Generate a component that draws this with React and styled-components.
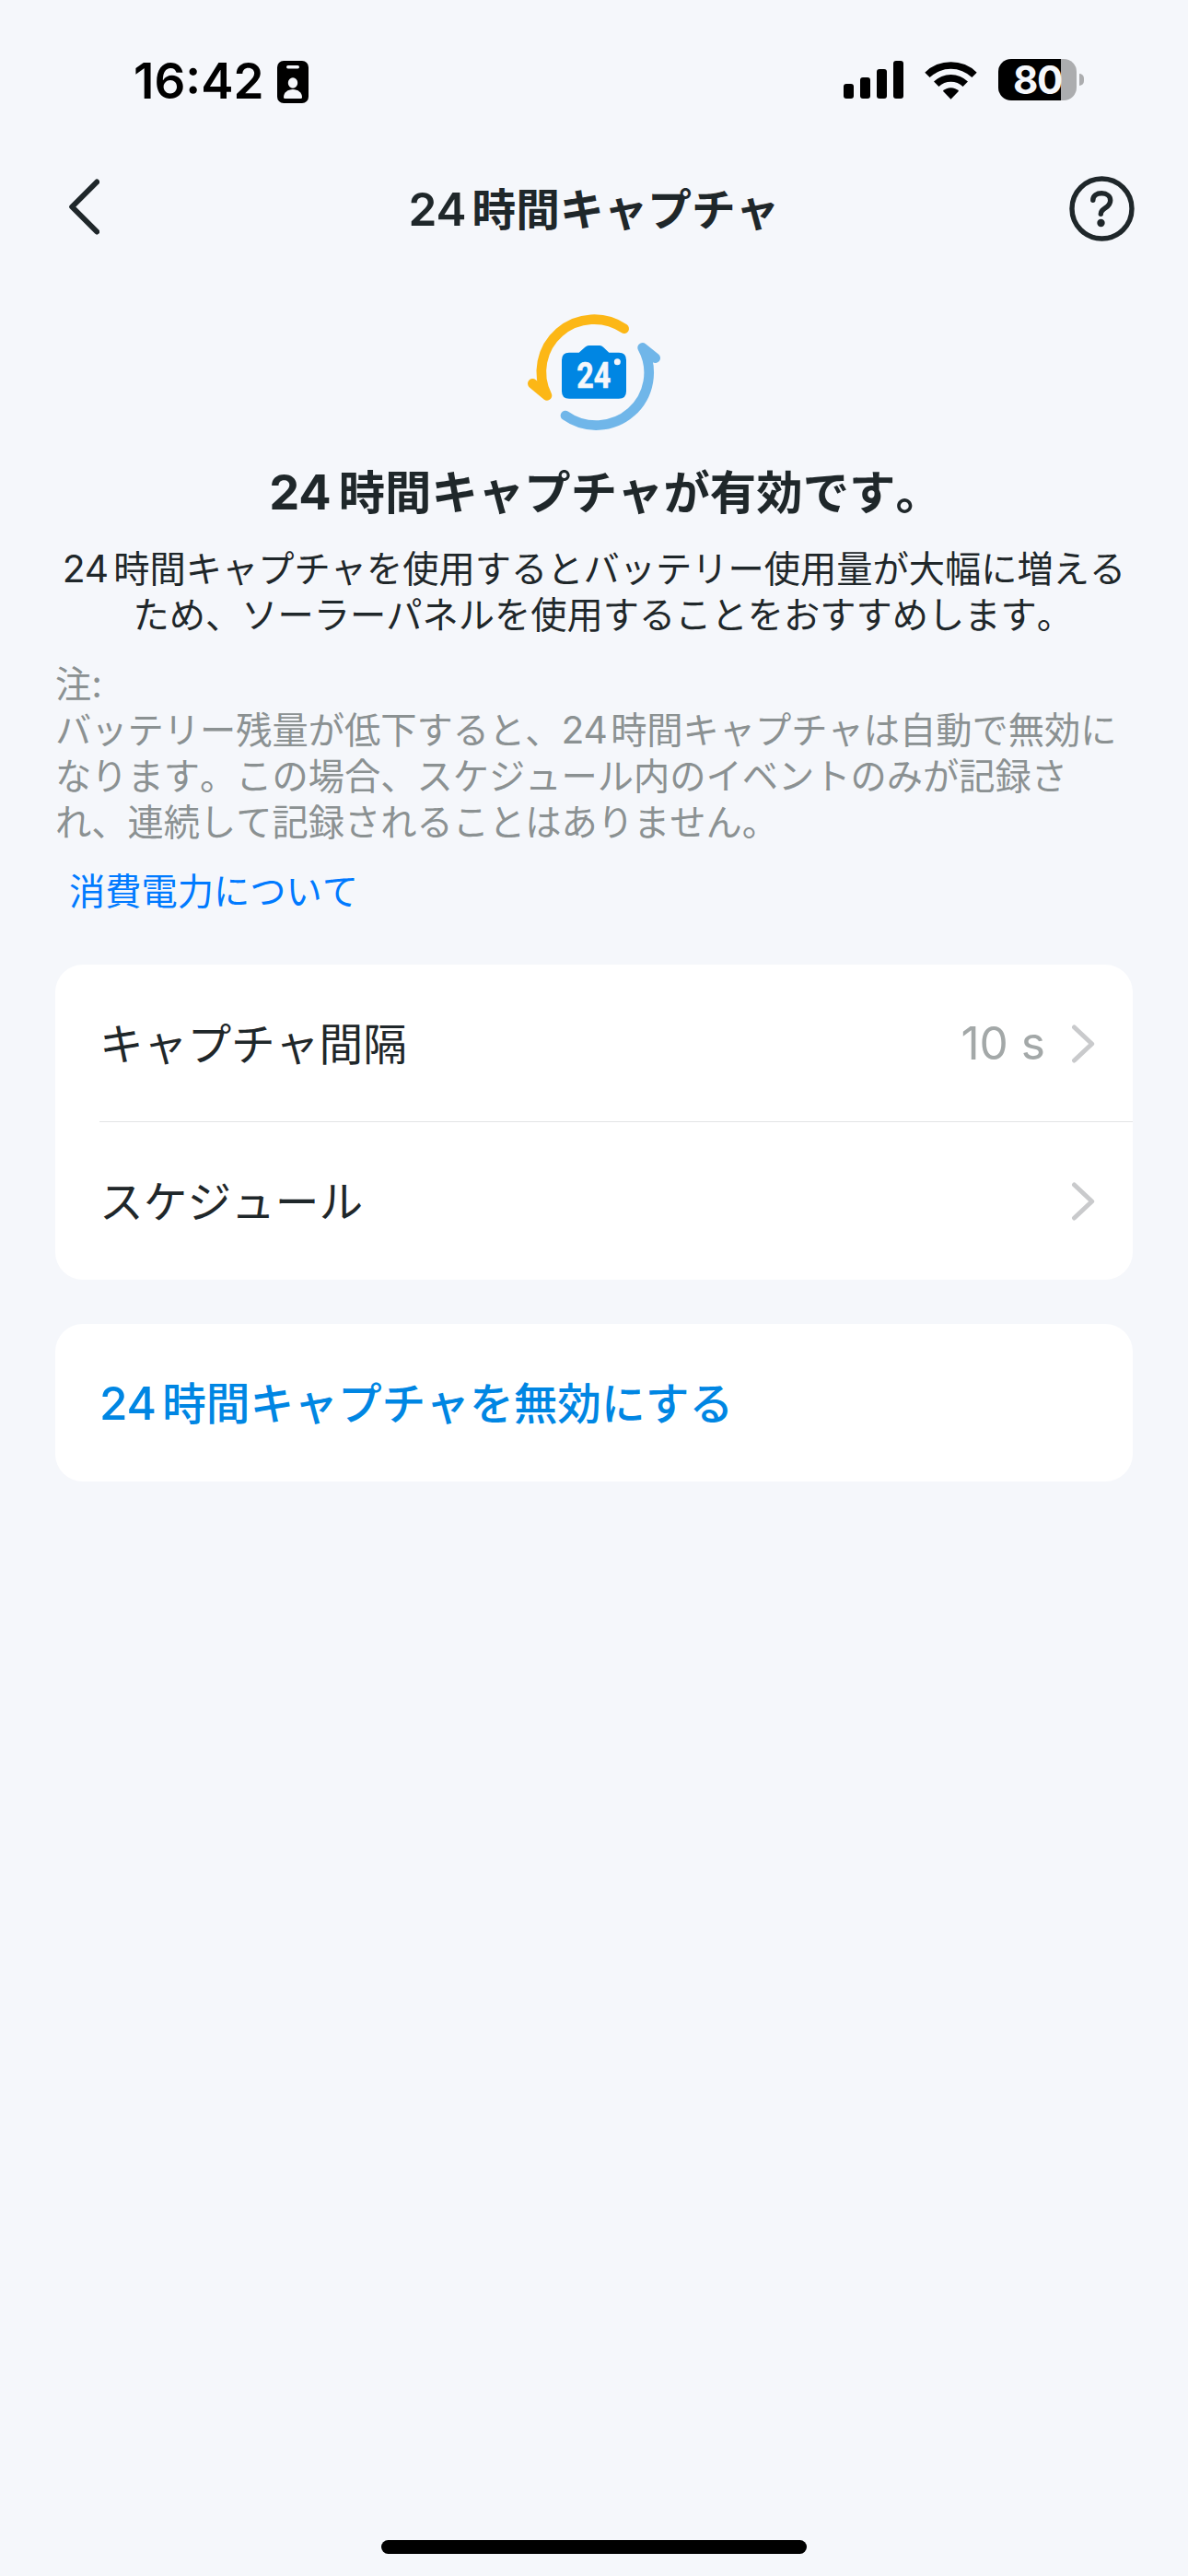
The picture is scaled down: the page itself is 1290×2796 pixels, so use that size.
import React from "react";
import styled, { createGlobalStyle } from "styled-components";

const color = {
  page: "#f5f7fb",
  ink: "#1f272a",
  muted: "#8b9192",
  value: "#a3a8a8",
  chevron: "#c9cacc",
  link: "#007aff",
  brand: "#0086e3",
  amber: "#fcb716",
  sky: "#70b6e9",
};

const GlobalStyle = createGlobalStyle`
  *, *::before, *::after { box-sizing: border-box; }
  body { margin: 0; background: ${color.page}; }
  button { border: 0; padding: 0; background: none; font: inherit; color: inherit; text-align: left; }
  svg { display: block; flex: none; }
`;

const Screen = styled.div`
  display: flex;
  flex-direction: column;
  width: 1290px;
  height: 2796px;
  overflow: hidden;
  background: ${color.page};
  color: ${color.ink};
  font-family: "Noto Sans CJK JP", Inter, sans-serif;
  font-kerning: none;
  text-spacing-trim: space-all;
  white-space: nowrap;
`;

const StatusBar = styled.header`
  display: flex;
  justify-content: space-between;
  align-items: flex-start;
  height: 177px;
  padding: 64px 113px 0 145px;
  color: #000;
`;

const StatusGroup = styled.div`
  display: flex;
  align-items: center;
  height: 45px;
  gap: ${(p) => p.$gap}px;
  margin-top: ${(p) => p.$drop || 0}px;
`;

const Clock = styled.span`
  width: 140px;
  font: 600 53px/45px Inter, sans-serif;
  letter-spacing: 0;
  font-kerning: normal;
`;

const Battery = styled.div`
  display: flex;
  align-items: center;
  gap: 3px;
`;

const BatteryBody = styled.div`
  width: 85px;
  height: 45px;
  padding-left: 16px;
  border-radius: 14px;
  background: linear-gradient(to right, #000 80%, #acadaf 80%);
  color: ${color.page};
  font: 700 42px/46px Inter, sans-serif;
  letter-spacing: -1.4px;
`;

const BatteryTip = styled.div`
  width: 5px;
  height: 13px;
  border-radius: 0 5px 5px 0;
  background: #acadaf;
`;

const NavBar = styled.nav`
  display: grid;
  grid-template-columns: 106px 1fr 120px;
  align-items: center;
  height: 94px;
  padding: 0 58px 0 72px;
`;

const NavButton = styled.button`
  display: flex;
  justify-content: ${(p) => p.$align};
  padding-top: ${(p) => p.$drop || 0}px;
`;

const NavTitle = styled.h1`
  margin: 0;
  text-align: center;
  font-size: 47.7px;
  font-weight: 700;
  line-height: 95px;
`;

const Num = styled.span`
  margin-right: ${(p) => p.$gap || 0}px;
  font-family: Inter, sans-serif;
  font-size: 1.04em;
  font-weight: ${(p) => p.$weight || 400};
  line-height: 0;
  letter-spacing: -0.02em;
`;

/* Closing full stop set half-width so a centred line is balanced on its ink. */
const LineEndStop = styled.span`
  margin-right: -0.5em;
`;

const Main = styled.main`
  display: flex;
  flex-direction: column;
  flex: 1;
  padding: 69px 60px 0;
`;

const HeroArt = styled.div`
  display: flex;
  justify-content: center;
  height: 159px;
`;

const Heading = styled.h2`
  margin: 0 0 25px;
  text-align: center;
  font-size: 50.4px;
  font-weight: 700;
  line-height: 66px;
`;

const Paragraph = styled.p`
  margin: 0 0 25px;
  text-align: ${(p) => p.$align || "left"};
  color: ${(p) => p.$color || "inherit"};
  font-size: 39.25px;
  line-height: 50px;
`;

const TextLink = styled.a`
  align-self: flex-start;
  margin: 0 0 57px 15px;
  color: ${color.link};
  font-size: 39.25px;
  line-height: 50px;
`;

const Card = styled.section`
  display: flex;
  flex-direction: column;
  margin-bottom: 48px;
  padding-left: 48px;
  border-radius: 30px;
  background: #fff;
`;

const Row = styled.button`
  display: flex;
  align-items: center;
  height: ${(p) => (p.$divided ? 172 : 171)}px;
  margin-top: ${(p) => (p.$divided ? -1 : 0)}px;
  padding: 0 41px 0 0;
  border-top: ${(p) => (p.$divided ? "1px solid #e3e4e6" : "0")};
`;

const RowLabel = styled.span`
  flex: 1;
  padding-bottom: 4px;
  color: ${(p) => p.$color || color.ink};
  font-size: 47.7px;
  font-weight: ${(p) => p.$weight || 400};
`;

const RowValue = styled.span`
  margin-right: 28px;
  color: ${color.value};
  font: 400 49.6px/1 Inter, sans-serif;
  font-kerning: normal;
`;

const HomeArea = styled.footer`
  display: flex;
  justify-content: center;
  height: 39px;
`;

const HomeIndicator = styled.div`
  width: 462px;
  height: 15px;
  border-radius: 8px;
  background: #000;
`;

const BadgeIcon = () => (
  <svg width="34" height="46" viewBox="0 0 34 46">
    <rect width="34" height="46" rx="7" fill="#000" />
    <rect x="10" y="5" width="14" height="3.4" rx="1.7" fill={color.page} />
    <ellipse cx="17" cy="24" rx="5.2" ry="5.8" fill={color.page} />
    <path d="M7 39.5C7 34.5 11.5 31 17 31s10 3.500 10 8.500q0 1.500-1.500 1.500h-17Q7 41 7 39.500z" fill={color.page} />
  </svg>
);

const SignalIcon = () => (
  <svg width="65" height="41" viewBox="0 0 65 41">
    {[25, 18, 9, 0].map((top, i) => (
      <rect key={top} x={i * 18} y={top} width="11" height={41 - top} rx="3" />
    ))}
  </svg>
);

const WifiIcon = () => (
  <svg width="57" height="42" viewBox="0 0 58 42">
    <path d="M0.300 12.500A41 41 0 0 1 57.700 12.500L52.300 18A33.500 33.500 0 0 0 5.700 18z" />
    <path d="M10.200 22.600A27 27 0 0 1 47.800 22.600L42.300 28.200A19 19 0 0 0 15.700 28.200z" />
    <path d="M20.200 33A12.500 12.500 0 0 1 37.800 33L29 42z" />
  </svg>
);

const BackIcon = () => (
  <svg width="36" height="62" viewBox="0 0 36 62" fill="none" stroke={color.ink} strokeWidth="6" strokeLinecap="round" strokeLinejoin="round">
    <path d="M33.200 3.500L6.200 30.500l27 27" />
  </svg>
);

const HelpIcon = () => (
  <svg width="71" height="71" viewBox="0 0 71 71" fill="none" stroke={color.ink} strokeWidth="5.4" strokeLinecap="round">
    <circle cx="35.500" cy="35.500" r="32.500" />
    <path d="M25.800 26.200C25.800 21.500 30 18.800 35.200 18.800C41 18.800 44.700 22 44.700 26.500C44.700 30.500 42.500 32.500 39.500 34.500C36.300 36.600 34.300 38 34.300 41.300" />
    <circle cx="34.500" cy="51" r="4.200" fill={color.ink} stroke="none" />
  </svg>
);

const ChevronIcon = () => (
  <svg width="26" height="42" viewBox="0 0 26 42" fill="none" stroke={color.chevron} strokeWidth="5" strokeLinecap="round" strokeLinejoin="round">
    <path d="M3.500 3L22.700 21L3.500 39" />
  </svg>
);

const CaptureArt = () => (
  <svg width="150" height="128" viewBox="90 60 450 384">
    <g fill="none" strokeWidth="32" strokeLinecap="round" strokeLinejoin="round">
      <path d="M413 110A172 171 0 0 0 162 328L115 289" stroke={color.amber} />
      <path d="M222 393A172 171 0 0 0 473 172L515 206" stroke={color.sky} />
    </g>
    <path
      d="M234 188h32l20-18q6-5 12-5h36q6 0 11 5l19 18h32q24 0 24 24v102q0 24-24 24H234q-24 0-24-24V212q0-24 24-24z"
      fill={color.brand}
    />
    <circle cx="391" cy="218" r="10.500" fill={color.page} />
    <text
      x="259"
      y="304"
      fill={color.page}
      stroke={color.page}
      strokeWidth="2"
      fontFamily="Roboto, sans-serif"
      fontWeight="700"
      fontSize="117"
      textLength="111"
      lengthAdjust="spacingAndGlyphs"
    >
      24
    </text>
  </svg>
);

export default function App() {
  return (
    <Screen>
      <GlobalStyle />
      <StatusBar>
        <StatusGroup $gap={16} $drop={2}>
          <Clock>16:42</Clock>
          <BadgeIcon />
        </StatusGroup>
        <StatusGroup $gap={23}>
          <SignalIcon />
          <WifiIcon />
          <Battery>
            <BatteryBody>80</BatteryBody>
            <BatteryTip />
          </Battery>
        </StatusGroup>
      </StatusBar>

      <NavBar>
        <NavButton $align="flex-start" aria-label="戻る">
          <BackIcon />
        </NavButton>
        <NavTitle>
          <Num $weight={600} $gap={7}>24</Num>時間キャプチャ
        </NavTitle>
        <NavButton $align="flex-end" $drop={3} aria-label="ヘルプ">
          <HelpIcon />
        </NavButton>
      </NavBar>

      <Main>
        <HeroArt>
          <CaptureArt />
        </HeroArt>
        <Heading>
          <Num $weight={700} $gap={9}>24</Num>時間キャプチャが有効です<LineEndStop>。</LineEndStop>
        </Heading>
        <Paragraph $align="center">
          <Num $gap={6}>24</Num>時間キャプチャを使用するとバッテリー使用量が大幅に増える
          <br />
          ため、ソーラーパネルを使用することをおすすめします<LineEndStop>。</LineEndStop>
        </Paragraph>
        <Paragraph $color={color.muted}>
          注<Num>:</Num>
          <br />
          バッテリー残量が低下すると、<Num $gap={4}>24</Num>時間キャプチャは自動で無効に
          <br />
          なります。この場合、スケジュール内のイベントのみが記録さ
          <br />
          れ、連続して記録されることはありません。
        </Paragraph>
        <TextLink>消費電力について</TextLink>

        <Card>
          <Row>
            <RowLabel>キャプチャ間隔</RowLabel>
            <RowValue>10 s</RowValue>
            <ChevronIcon />
          </Row>
          <Row $divided>
            <RowLabel>スケジュール</RowLabel>
            <ChevronIcon />
          </Row>
        </Card>
        <Card>
          <Row>
            <RowLabel $color={color.brand} $weight={500}>
              <Num $weight={500} $gap={7}>24</Num>時間キャプチャを無効にする
            </RowLabel>
          </Row>
        </Card>
      </Main>

      <HomeArea>
        <HomeIndicator />
      </HomeArea>
    </Screen>
  );
}
